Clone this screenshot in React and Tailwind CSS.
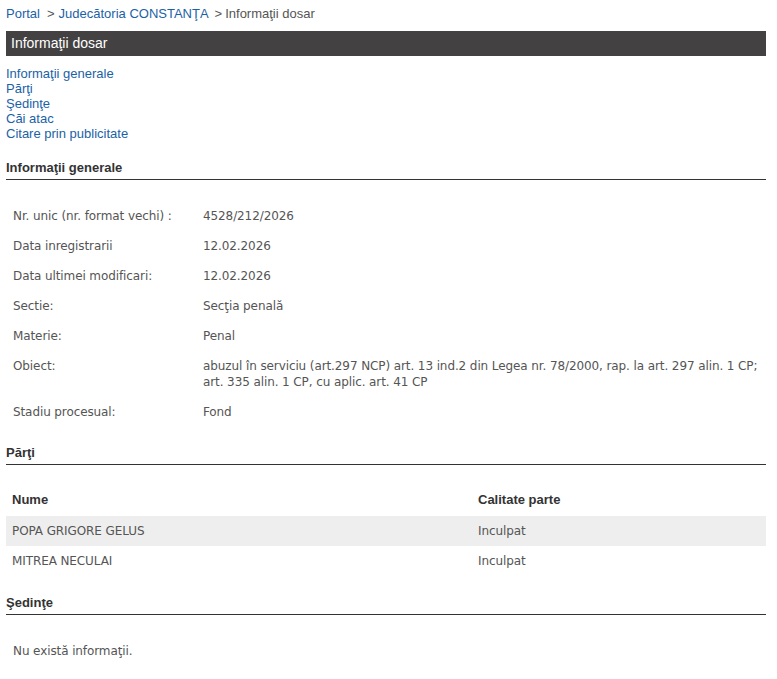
const arial = { fontFamily: '"Liberation Sans", Arial, sans-serif' }
const tahoma = { fontFamily: '"DejaVu Sans", Verdana, sans-serif' }

const general = [
  ['Nr. unic (nr. format vechi) :', '4528/212/2026'],
  ['Data inregistrarii', '12.02.2026'],
  ['Data ultimei modificari:', '12.02.2026'],
  ['Sectie:', 'Secţia penală'],
  ['Materie:', 'Penal'],
  ['Obiect:', 'abuzul în serviciu (art.297 NCP) art. 13 ind.2 din Legea nr. 78/2000, rap. la art. 297 alin. 1 CP; art. 335 alin. 1 CP, cu aplic. art. 41 CP'],
  ['Stadiu procesual:', 'Fond'],
]

const parti = [
  ['POPA GRIGORE GELUS', 'Inculpat'],
  ['MITREA NECULAI', 'Inculpat'],
]

function SectionTitle({ children }) {
  return (
    <h2 className="text-[13px] font-bold text-[#333] leading-[15px] pb-[4px] border-b border-[#333]" style={arial}>
      {children}
    </h2>
  )
}

export default function App() {
  return (
    <div className="bg-white w-[777px] min-h-[679px] px-[6px] pt-[6px]" style={arial}>
      {/* breadcrumb */}
      <div className="text-[13px] leading-[15px] text-[#555]">
        <a className="text-[#1a62a6]">Portal</a>
        <span className="ml-[7px] mr-[4px]">&gt;</span>
        <a className="text-[#1a62a6]">Judecătoria CONSTANŢA</a>
        <span className="ml-[6px] mr-[3px]">&gt;</span>
        <span>Informaţii dosar</span>
      </div>

      <div className="mt-[10px] w-[760px] h-[25px] bg-[#434142] text-white text-[14px] leading-[25px] pl-[5px]">
        Informaţii dosar
      </div>

      <div className="mt-[10px] flex flex-col text-[13px] leading-[15px] text-[#1a62a6]">
        <a>Informaţii generale</a>
        <a>Părţi</a>
        <a>Şedinţe</a>
        <a>Căi atac</a>
        <a>Citare prin publicitate</a>
      </div>

      <div className="w-[760px]">
        <div className="mt-[19px]">
          <SectionTitle>Informaţii generale</SectionTitle>
        </div>
        <table className="mt-[21px] w-full text-[12px] tracking-[-0.1px] text-[#555]" style={tahoma}>
          <tbody>
            {general.map(([k, v]) => (
              <tr key={k}>
                <td className="w-[190px] align-top px-[7px] py-[7px] leading-[16px]">{k}</td>
                <td className="align-top pl-[7px] pr-0 py-[7px] leading-[16px]">{v}</td>
              </tr>
            ))}
          </tbody>
        </table>

        <div className="mt-[18px]">
          <SectionTitle>Părţi</SectionTitle>
        </div>
        <table className="mt-[21px] w-full text-[12px] tracking-[-0.1px] text-[#555]" style={tahoma}>
          <thead>
            <tr>
              <th className="text-left w-[466px] px-[6px] pt-[6px] pb-[8px] leading-[16px] font-bold text-[#333] text-[13px] tracking-normal" style={arial}>Nume</th>
              <th className="text-left px-[6px] pt-[6px] pb-[8px] leading-[16px] font-bold text-[#333] text-[13px] tracking-normal" style={arial}>Calitate parte</th>
            </tr>
          </thead>
          <tbody>
            {parti.map(([n, c], i) => (
              <tr key={n} className={i % 2 === 0 ? 'bg-[#eeeeee]' : ''}>
                <td className="px-[6px] py-[7px] leading-[16px]">{n}</td>
                <td className="px-[6px] py-[7px] leading-[16px]">{c}</td>
              </tr>
            ))}
          </tbody>
        </table>

        <div className="mt-[19px]">
          <SectionTitle>Şedinţe</SectionTitle>
        </div>
        <p className="mt-[28px] pl-[7px] text-[12px] tracking-[-0.1px] text-[#555] leading-[16px]" style={tahoma}>
          Nu există informaţii.
        </p>
      </div>
    </div>
  )
}
